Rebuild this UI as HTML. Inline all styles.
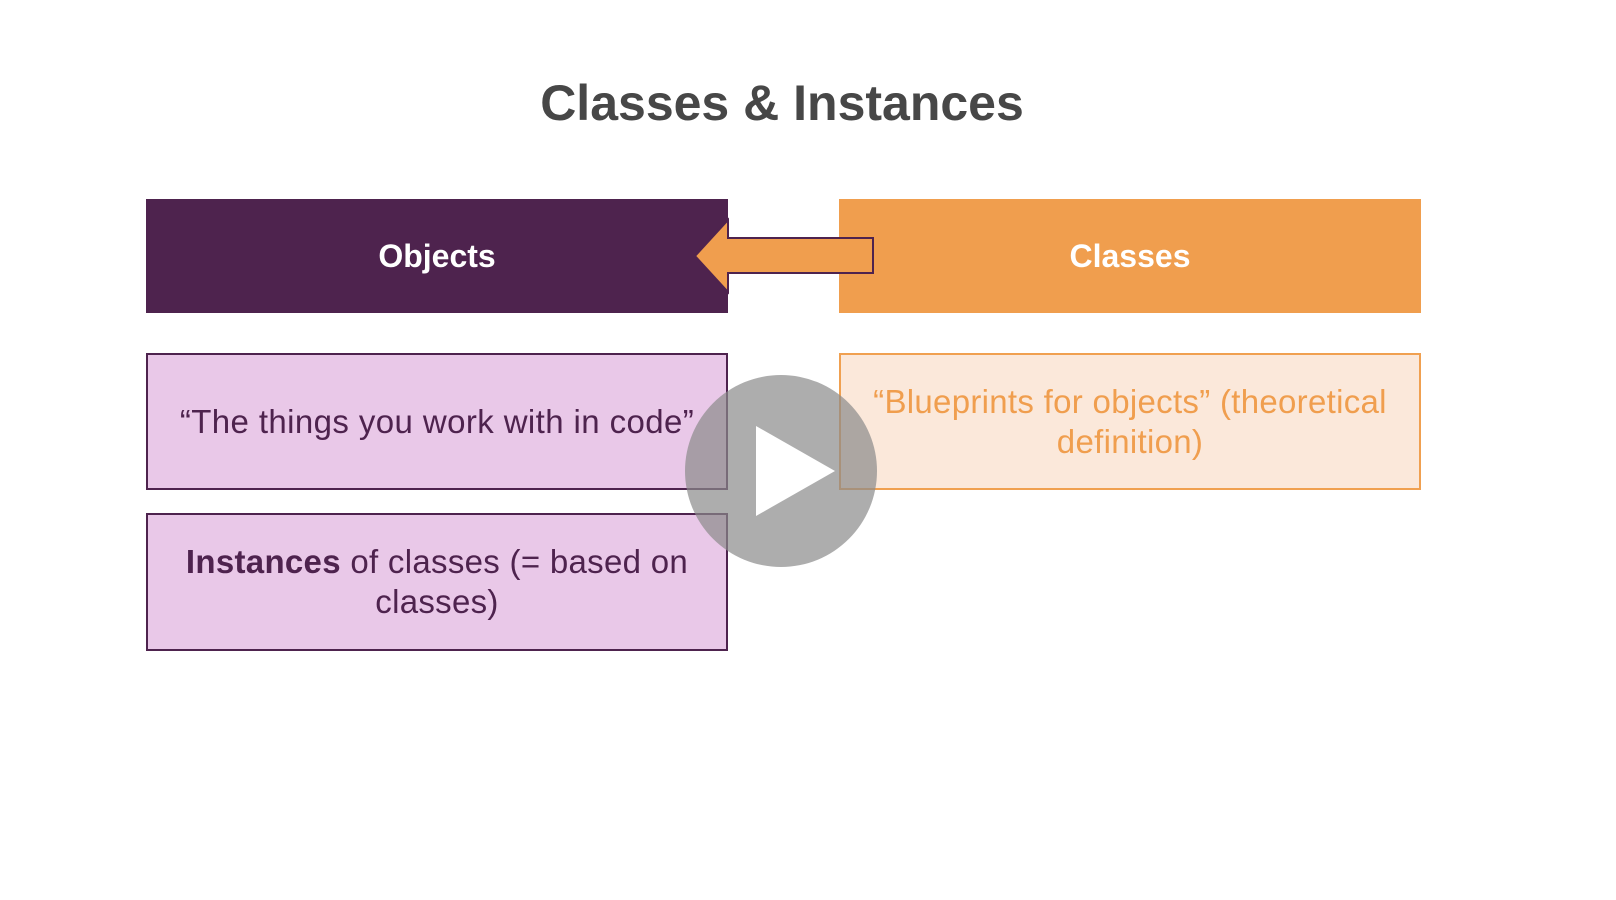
<!DOCTYPE html>
<html><head><meta charset="utf-8"><style>
html,body{margin:0;padding:0;width:1616px;height:900px;background:#fff;overflow:hidden;font-family:"Liberation Sans",sans-serif;}
.a{position:absolute;box-sizing:border-box;display:flex;align-items:center;justify-content:center;text-align:center;}
</style></head><body>
<div class="a" style="left:0;top:68px;width:1564px;height:70px;font-size:50px;font-weight:bold;color:#474747;">Classes &amp; Instances</div>
<div class="a" style="left:146px;top:199px;width:582px;height:114px;background:#4e234e;color:#fff;font-size:32px;font-weight:bold;">Objects</div>
<div class="a" style="left:839px;top:199px;width:582px;height:114px;background:#f09e4e;color:#fff;font-size:32px;font-weight:bold;">Classes</div>
<div class="a" style="left:146px;top:353px;width:582px;height:137px;background:#e9c8e8;border:2px solid #4e234e;color:#4e234e;font-size:33px;letter-spacing:0.4px;white-space:nowrap;">“The things you work with in code”</div>
<div class="a" style="left:839px;top:353px;width:582px;height:137px;background:#fbe8da;border:2px solid #f0a050;color:#f09e4e;font-size:33px;padding:0 14px;line-height:40px;letter-spacing:0.3px;">“Blueprints for objects” (theoretical definition)</div>
<div class="a" style="left:146px;top:513px;width:582px;height:138px;background:#e9c8e8;border:2px solid #4e234e;color:#4e234e;font-size:33px;padding:0 30px;line-height:40px;letter-spacing:0.3px;"><span><b>Instances</b> of classes (= based on classes)</span></div>
<svg style="position:absolute;left:0;top:0" width="1616" height="900">
<path d="M695 256 L728 220 L728 238 L873 238 L873 273 L728 273 L728 292 Z" fill="#f09e4e" stroke="#4e234e" stroke-width="2"/>
<circle cx="781" cy="471" r="96" fill="#8a8a8a" fill-opacity="0.7"/>
<path d="M756 426 L835 471 L756 516 Z" fill="#fff"/>
</svg>
</body></html>
